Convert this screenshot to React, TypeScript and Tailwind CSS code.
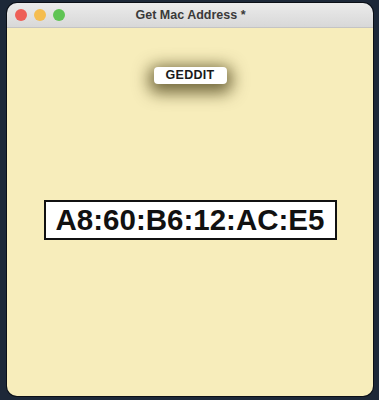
import React from "react";

const App = () => {
  return (
    <div className="w-[379px] h-[400px] bg-[#1d2838] pt-[3px] pl-[7px] pr-[6px] pb-[4px] font-['Liberation_Sans',sans-serif]">
      <div className="flex flex-col h-full rounded-[10px] overflow-hidden shadow-[0_0_0_1px_#0b0f16]">
        {/* Title bar */}
        <div className="relative flex items-center justify-center h-[25px] bg-gradient-to-b from-[#ebebeb] to-[#d8d8d8] border-b border-[#c4c4c4]">
          <div className="absolute left-[8px] top-[6px] flex gap-[7px]">
            <span className="w-[12px] h-[12px] rounded-full bg-[#ee5f57]" />
            <span className="w-[12px] h-[12px] rounded-full bg-[#f5bd4f]" />
            <span className="w-[12px] h-[12px] rounded-full bg-[#5fc454]" />
          </div>
          <span className="text-[12.5px] font-bold text-[#3a3a3a] ml-[1px]">Get Mac Address *</span>
        </div>

        {/* Content */}
        <div className="flex-1 flex flex-col items-center bg-[#f7edbb]">
          <button className="mt-[39px] w-[73px] h-[17px] rounded-[4px] bg-white text-[12.5px] font-bold text-[#1a1a1a] leading-none tracking-[0.3px] shadow-[0_4px_16px_5px_rgba(60,50,10,0.7)]">
            GEDDIT
          </button>
          <div className="mt-[116px] w-[293px] h-[40px] border-2 border-[#111] bg-white flex items-center justify-center">
            <span className="text-[29.5px] font-bold text-[#111] leading-none">A8:60:B6:12:AC:E5</span>
          </div>
        </div>
      </div>
    </div>
  );
};

export default App;
